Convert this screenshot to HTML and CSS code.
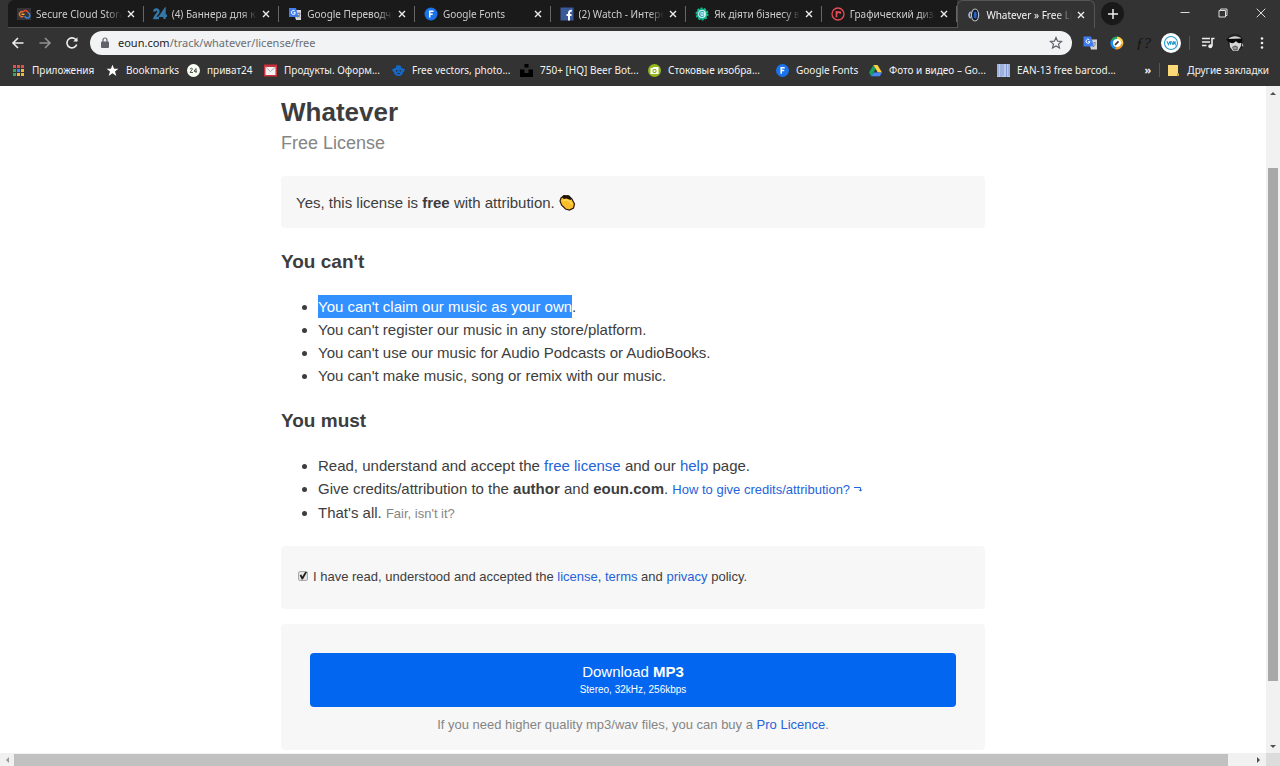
FILE: index.html
```
<!DOCTYPE html>
<html lang="en">
<head>
<meta charset="utf-8">
<meta name="viewport" content="width=device-width, initial-scale=1">
<title>Whatever » Free License</title>
<link rel="stylesheet" href="styles.css">
</head>
<body>
<header class="browser">
  <div class="tabstrip">
    <div class="tabs">
      <div class="tab"><svg class="fav" viewBox="0 0 14 14"><rect y="1" width="14" height="12" fill="#353535"/><g fill="none" stroke-width="1.4"><path d="M6.500 5.200a2.500 2.500 0 1 0 0 4" stroke="#ef6b35"/><path d="M4.500 7.300h3" stroke="#f5b72c"/><path d="M6.500 4.500a2.700 2.700 0 0 1 4.700 1.700" stroke="#e94635"/><path d="M11.400 6a2.600 2.600 0 1 1-3.600 3" stroke="#3387e8"/></g></svg><span class="tab-title">Secure Cloud Stora</span><button class="close" aria-label="Close tab"><svg viewBox="0 0 8 8"><path d="m1 1 6 6m0-6-6 6"/></svg></button></div>
      <div class="tab"><svg class="fav" viewBox="0 0 14 14"><g fill="none" stroke="#3478a8" stroke-width="2.4"><path d="M1 4.500C2 1.500 6 2 5.300 5 5 7 2 8.500 1.500 11H6"/><path d="M11.500 12V3L7.500 8.800H14"/></g></svg><span class="tab-title">(4) Баннера для ка</span><button class="close" aria-label="Close tab"><svg viewBox="0 0 8 8"><path d="m1 1 6 6m0-6-6 6"/></svg></button></div>
      <div class="tab"><svg class="fav" viewBox="0 0 14 14"><path d="M5 3h8v10H8z" fill="#d8d9dc"/><path d="M1 1h7l2.500 9H1z" fill="#3f7df0"/><path d="M6.800 4a2 2 0 1 0 .6 1.700H5.500" fill="none" stroke="#fff"/><path d="M9.500 6.500h3M11 5.500v1M12 7c-.5 2-1.500 3-2.500 3.500M10 8l2 2.500" fill="none" stroke="#667" stroke-width=".8"/></svg><span class="tab-title">Google Переводчи</span><button class="close" aria-label="Close tab"><svg viewBox="0 0 8 8"><path d="m1 1 6 6m0-6-6 6"/></svg></button></div>
      <div class="tab"><svg class="fav" viewBox="0 0 14 14"><circle cx="7" cy="7" r="6.500" fill="#1a73e8"/><path d="M5.700 10.500V4.200h3.800M5.700 7.200h3" fill="none" stroke="#fff" stroke-width="1.500"/></svg><span class="tab-title">Google Fonts</span><button class="close" aria-label="Close tab"><svg viewBox="0 0 8 8"><path d="m1 1 6 6m0-6-6 6"/></svg></button></div>
      <div class="tab"><svg class="fav" viewBox="0 0 14 14"><rect x=".5" y=".5" width="13" height="13" fill="#3b5998"/><path d="M9 13.500V6q0-2.500 2.800-2.200M6.500 8h5" fill="none" stroke="#fff" stroke-width="2"/></svg><span class="tab-title">(2) Watch - Интере</span><button class="close" aria-label="Close tab"><svg viewBox="0 0 8 8"><path d="m1 1 6 6m0-6-6 6"/></svg></button></div>
      <div class="tab"><svg class="fav" viewBox="0 0 14 14"><circle cx="7" cy="7" r="5.500" fill="#14b88a" stroke="#14b88a" stroke-width="2" stroke-dasharray="2 1.400"/><circle cx="7" cy="7" r="3.900" fill="#d9f5f2"/><path d="M9 5.500A2.500 2.500 0 1 0 9 8.500M5.500 7h3.500" fill="none" stroke="#229bc0" stroke-width="1.200"/></svg><span class="tab-title">Як діяти бізнесу в</span><button class="close" aria-label="Close tab"><svg viewBox="0 0 8 8"><path d="m1 1 6 6m0-6-6 6"/></svg></button></div>
      <div class="tab"><svg class="fav" viewBox="0 0 14 14"><g fill="none" stroke="#e84b55"><circle cx="7" cy="7" r="6" stroke-width="1.300"/><path d="M5.500 10.300V4M5.500 6.500q1-2 3.700-1.300v1.500" stroke-width="1.700"/></g></svg><span class="tab-title">Графический диза</span><button class="close" aria-label="Close tab"><svg viewBox="0 0 8 8"><path d="m1 1 6 6m0-6-6 6"/></svg></button></div>
      <div class="tab active"><svg class="fav" viewBox="0 0 14 14"><ellipse cx="8" cy="7" rx="3.600" ry="6" fill="#151922" stroke="#b9bfcb" stroke-width="1.200"/><ellipse cx="8.200" cy="7" rx="1.500" ry="3.500" fill="#2864c8"/><path d="M3.700 3.800Q.3 7 3.700 10.200" fill="none" stroke="#a9b8da" stroke-width="1.700"/></svg><span class="tab-title">Whatever » Free Li</span><button class="close" aria-label="Close tab"><svg viewBox="0 0 8 8"><path d="m1 1 6 6m0-6-6 6"/></svg></button></div>
    </div>
    <button class="new-tab" aria-label="New tab"><svg viewBox="0 0 10 10"><path d="M5 0v10M0 5h10"/></svg></button>
    <div class="window-controls">
      <button aria-label="Minimize"><svg viewBox="0 0 10 10"><path d="M.5 4.500h9"/></svg></button>
      <button aria-label="Restore"><svg viewBox="0 0 10 10"><path d="M1 2.500h6.500V9H1zM2.700 2.500V1h6.300v6.500H7.500"/></svg></button>
      <button aria-label="Close"><svg viewBox="0 0 10 10"><path d="m.7.7 8.600 8.600m0-8.600L.7 9.300"/></svg></button>
    </div>
  </div>
  <div class="toolbar">
    <button class="tool" aria-label="Back"><svg viewBox="0 0 14 14" class="line"><path d="M12.500 7H2M7 2 2 7l5 5"/></svg></button>
    <button class="tool dim" aria-label="Forward"><svg viewBox="0 0 14 14" class="line"><path d="M1.500 7H12M7 2l5 5-5 5"/></svg></button>
    <button class="tool" aria-label="Reload"><svg viewBox="0 0 14 14" class="line"><path d="M11.700 8.500a5 5 0 1 1-1.200-5.200L12 5"/><path d="M12.500 1.200v4.300H8.200z" fill="#eee" stroke="none"/></svg></button>
    <div class="omnibox">
      <svg class="lock" viewBox="0 0 10 12"><rect x="1" y="4.500" width="8" height="6.500" rx="1" fill="#5f6368"/><path d="M3 5V3a2 2 0 0 1 4 0v2" fill="none" stroke="#5f6368" stroke-width="1.200"/></svg>
      <a class="url" href="#top"><span class="host">eoun.com</span>/track/whatever/license/free</a>
      <button class="star" aria-label="Bookmark this page"><svg viewBox="0 0 14 14"><path d="m7 1.500 1.600 3.700 4 .3-3.100 2.600 1 4L7 10l-3.500 2.100 1-4-3.100-2.600 4-.3z" fill="none" stroke="#5f6368" stroke-width="1.200"/></svg></button>
    </div>
    <div class="extensions">
      <button class="tool" aria-label="Translate"><svg viewBox="0 0 14 14"><path d="M5 3.500h9v10H8z" fill="#d2d3d5"/><path d="M.5.500h7.500l3 10H.5z" fill="#3f7df0"/><path d="M6.300 3.700a2 2 0 1 0 .7 2H5" fill="none" stroke="#fff"/><path d="M10 7h3M11.500 6v1M12.500 7.500c-.5 2-1.500 3-2.500 3.500" fill="none" stroke="#778" stroke-width=".8"/></svg></button>
      <button class="tool" aria-label="Color picker"><svg viewBox="0 0 14 14"><path d="M7 7 1.400 3.500A6.500 6.500 0 0 0 5 13.200z" fill="#1d8df2"/><path d="M7 7 5 13.200A6.500 6.500 0 0 0 13 9z" fill="#f39b27"/><path d="M7 7l6 2A6.500 6.500 0 0 0 7 .5z" fill="#ffd142"/><path d="M7 7V.5a6.500 6.500 0 0 0-5.600 3z" fill="#21a465"/><circle cx="7" cy="7" r="4" fill="#fff"/><path d="m5 9 3.500-3.700" stroke="#333" stroke-width="1.700"/></svg></button>
      <button class="tool fx" aria-label="Font finder">ƒ?</button>
      <button class="tool" aria-label="Extension"><svg class="large" viewBox="0 0 20 20"><circle cx="10" cy="10" r="10" fill="#fff"/><circle cx="10" cy="10" r="6.500" fill="none" stroke="#269bd0" stroke-width="1.100"/><path d="m6 8.200 1.500 3.500L9 8.200M9.500 8.200v3.500m1-3.500 1.200 3.500m.8-3.500v3.500m.3-3 1.400 2.500V8.200" fill="none" stroke="#269bd0" stroke-width="1.100"/></svg></button>
      <span class="rule"></span>
      <button class="tool" aria-label="Media"><svg viewBox="0 0 14 14" class="line"><path d="M1 2.500h8M1 6h8M1 9.500h4.500M11 10V2.500h2.500"/><circle cx="9.300" cy="10.200" r="2" fill="#eee" stroke="none"/></svg></button>
      <button class="tool" aria-label="Profile"><svg class="large" viewBox="0 0 20 20"><path d="M3 8C2 3 5 1 10 1c5-.5 8 3 7.500 7l1 6-5 4H7l-4-6z" fill="#222"/><path d="M4 5q6-3.500 12 0v8l-3 5H8l-3-4z" fill="#d6d6d6"/><path d="M1 6 17 5.500l-.5 4q-3 2-5-1h-1Q8 11.500 3.500 9z" fill="#080808"/><path d="M7 14q3.500-3 6 0l-.5 3.500h-4z" fill="#666"/><path d="M8.500 15h3M17 10.500l1 3" fill="none" stroke="#ccc"/></svg></button>
      <button class="tool" aria-label="Menu"><svg viewBox="0 0 14 14" fill="#eee"><circle cx="7" cy="2.500" r="1.300"/><circle cx="7" cy="7" r="1.300"/><circle cx="7" cy="11.500" r="1.300"/></svg></button>
    </div>
  </div>
  <nav class="bookmarks" aria-label="Bookmarks">
    <a class="bm apps" href="#"><svg viewBox="0 0 13 13"><path d="M1 1h3v3H1zM5 1h3v3H5zM9 1h3v3H9z" fill="#e05245"/><path d="M1 5h3v3H1zM1 9h3v3H1z" fill="#40a461"/><path d="M5 5h3v3H5z" fill="#4285f4"/><path d="M9 5h3v3H9zM9 9h3v3H9zM5 9h3v3H5z" fill="#eeb83a"/></svg><span>Приложения</span></a>
    <a class="bm starred" href="#"><svg viewBox="0 0 13 13"><path d="m6.500.8 1.600 4h4.300L9 7.500l1.300 4.400-3.800-2.600-3.800 2.600L4 7.500.6 4.800h4.300z" fill="#fff"/></svg><span>Bookmarks</span></a>
    <a class="bm short" href="#"><svg viewBox="0 0 13 13"><circle cx="6.500" cy="6.500" r="6.500" fill="#f7fff3"/><path d="M3 5q2-2 2.500 0L3 8.500h3M9 9V4.500L7 7.300h3" fill="none" stroke="#555"/></svg><span>приват24</span></a>
    <a class="bm wide" href="#"><svg viewBox="0 0 13 13"><rect y=".5" width="13" height="12" fill="#c9313d"/><path d="M1.500 3h10v8h-10z" fill="#f3f3f3"/><path d="m1.500 3 5 4.500 5-4.500" fill="none" stroke="#b9a8a9"/></svg><span>Продукты. Оформ...</span></a>
    <a class="bm wide" href="#"><svg viewBox="0 0 13 13"><path d="M2 4h9v5q-1 3-4.500 3T2 9zM0 5h2v3H1zM11 5h2l-1 3h-1zM4 2l2-1 3 1v2H4z" fill="#1768c4"/><path d="M4 6h1.500v1.500H4zM7.500 6H9v1.500H7.500zM5 9h3v1H5z" fill="#333"/></svg><span>Free vectors, photo...</span></a>
    <a class="bm wide" href="#"><svg viewBox="0 0 13 13"><path d="M4.500 0h4v3.500h-4zM0 5.500h4.500V9h4V5.500H13V13H0z" fill="#000"/></svg><span>750+ [HQ] Beer Bot...</span></a>
    <a class="bm wide" href="#"><svg viewBox="0 0 13 13"><circle cx="6.500" cy="6.500" r="6.500" fill="#94b71d"/><path d="M2.500 4h2l1-1h5v7h-8z" fill="#fff"/><circle cx="6.500" cy="7" r="2.200" fill="#94b71d"/><circle cx="6.500" cy="7" r="1" fill="#fff"/></svg><span>Стоковые изобра...</span></a>
    <a class="bm medium" href="#"><svg viewBox="0 0 13 13"><circle cx="6.500" cy="6.500" r="6.500" fill="#1a73e8"/><path d="M5.200 9.800V3.700h3.500M5.200 6.600h3" fill="none" stroke="#fff" stroke-width="1.500"/></svg><span>Google Fonts</span></a>
    <a class="bm wide" href="#"><svg viewBox="0 0 13 13"><path d="M4.500 1 0 8.500l2.200 3.700 4.500-7.500z" fill="#18a25f"/><path d="M4.500 1h4L13 8.500H8.800z" fill="#ffcf44"/><path d="M4.500 8.500H13l-2.200 3.700H2.200z" fill="#4688f4"/></svg><span>Фото и видео – Go...</span></a>
    <a class="bm wide" href="#"><svg viewBox="0 0 13 13"><path d="M0 0h13v13H0z" fill="#bac9ec"/><path d="M1 0v12M4 0v13M6 0v12M9.500 0v13M12 0v12" stroke="#8199cf"/></svg><span>EAN-13 free barcod...</span></a>
    <div class="bookmark-end"><button class="more" aria-label="More bookmarks">»</button><span class="rule"></span><a class="bm" href="#"><svg viewBox="0 0 13 13"><path d="M1 1h10v8l1 1v2H1z" fill="#fada76"/><path d="M10 9v3h2v-2z" fill="#c99e35"/></svg><span>Другие закладки</span></a></div>
  </nav>
</header>
<div class="viewport">
  <main id="top" class="page">
    <article class="content">
      <h1>Whatever</h1>
      <p class="subtitle">Free License</p>
      <div class="panel notice">Yes, this license is <strong>free</strong> with attribution. <svg class="clap" role="img" aria-label="clapping hands" viewBox="0 0 17 17"><path d="M2 4 5 1.500l5 .5 3 3 2.500 5-1 4-4 2-4-1-4-4-1.500-4z" fill="#fcbd2c" stroke="#281b0b" stroke-width="1.200"/><path d="m3 3.500 2-2.500 2 1 2-1 2 2 2 1.500-1.500 1.500-4-1.500L5 5z" fill="#211509"/><path d="m4 7 3-1.500 4 2 2 3" fill="none" stroke="#ffdb50" stroke-width="1.500"/></svg></div>
      <h2>You can't</h2>
      <ul>
        <li><mark>You can't claim our music as your own</mark>.</li>
        <li>You can't register our music in any store/platform.</li>
        <li>You can't use our music for Audio Podcasts or AudioBooks.</li>
        <li>You can't make music, song or remix with our music.</li>
      </ul>
      <h2>You must</h2>
      <ul>
        <li>Read, understand and accept the <a href="#">free license</a> and our <a href="#">help</a> page.</li>
        <li>Give credits/attribution to the <strong>author</strong> and <strong>eoun.com</strong>. <a class="small" href="#">How to give credits/attribution? <svg class="turn" viewBox="0 0 9 9"><path d="M0 2.500h6.500V6M5 4.500l1.500 1.700L8 4.500"/></svg></a></li>
        <li>That's all. <span class="small muted">Fair, isn't it?</span></li>
      </ul>
      <div class="panel consent"><input id="accept" type="checkbox" checked><label for="accept">I have read, understood and accepted the <a href="#">license</a>, <a href="#">terms</a> and <a href="#">privacy</a> policy.</label></div>
      <div class="panel download">
        <button class="download-button"><span>Download <strong>MP3</strong></span><small>Stereo, 32kHz, 256kbps</small></button>
        <p class="small muted">If you need higher quality mp3/wav files, you can buy a <a href="#">Pro Licence</a>.</p>
      </div>
    </article>
  </main>
  <div class="scroll vertical" aria-hidden="true"><svg viewBox="0 0 14 14"><path d="m4 9 3-3 3 3z"/></svg><div class="track"><div class="thumb"></div></div><svg viewBox="0 0 14 14"><path d="m4 6 3 3 3-3z"/></svg></div>
  <div class="scroll horizontal" aria-hidden="true"><svg class="disabled" viewBox="0 0 14 14"><path d="M9 4 6 7l3 3z"/></svg><div class="track"><div class="thumb"></div></div><svg viewBox="0 0 14 14"><path d="m5 4 3 3-3 3z"/></svg></div>
  <div class="corner"></div>
</div>
</body>
</html>
```
FILE: styles.css
```
* { box-sizing: border-box; }
body {
  margin: 0;
  height: 100vh;
  display: flex;
  flex-direction: column;
  overflow: hidden;
  background: #fff;
  color: #3d3d3d;
  font: 15px/23px "Liberation Sans", Arial, sans-serif;
}
button { margin: 0; padding: 0; border: 0; background: none; color: inherit; font: inherit; }
a { color: #2563d9; text-decoration: none; }
svg { display: block; flex: none; }

.browser { background: #333; color: #eee; font: 10px/14px "Noto Sans", "Open Sans", sans-serif; }
.tabstrip { display: flex; height: 28px; padding-left: 8px; }
.tabs { display: flex; flex: 0 1 1087px; min-width: 0; }
.tab {
  flex: 1 1 0;
  min-width: 0;
  display: flex;
  align-items: center;
  gap: 5px;
  padding: 0 9px;
  background: linear-gradient(#666, #666) right center / 1px 16px no-repeat #1a1a1a;
  border-bottom: 1px solid #515151;
  color: #ccc;
}
.tab:first-child { border-top-left-radius: 6px; }
.tab.active { background: #333; color: #f4f4f4; border: 1px solid #555; border-bottom: 0; border-radius: 6px 6px 0 0; }
.fav { width: 14px; height: 14px; }
.tab-title {
  flex: 1;
  min-width: 0;
  white-space: nowrap;
  mask-image: linear-gradient(90deg, #000 82%, transparent);
}
.close svg { width: 8px; height: 8px; stroke: #eee; stroke-width: 1.4; }
.new-tab { display: grid; place-items: center; flex: none; width: 23px; height: 23px; margin: 2px 0 0 6px; border-radius: 50%; background: #191919; }
.new-tab svg { width: 10px; height: 10px; stroke: #eee; stroke-width: 1.5; }
.window-controls { display: flex; margin-left: auto; }
.window-controls button { display: grid; place-items: center; width: 38px; height: 25px; }
.window-controls svg { width: 10px; height: 10px; fill: none; stroke: #ddd; }

.toolbar { display: flex; align-items: center; height: 30px; padding: 0 5px 0 4px; }
.tool { display: grid; place-items: center; flex: none; width: 27px; height: 24px; }
.tool svg { width: 14px; height: 14px; }
.tool svg.large { width: 20px; height: 20px; }
.line { fill: none; stroke: #eee; stroke-width: 1.6; }
.dim { opacity: .5; }
.fx { color: #111; font: italic 15px/20px "Liberation Serif", serif; }
.omnibox { flex: 1; min-width: 0; display: flex; align-items: center; height: 24px; margin: 0 4px 0 5px; padding: 0 9px 0 10px; border-radius: 12px; background: #f1f3f4; }
.lock { width: 10px; height: 12px; }
.url { flex: 1; margin-left: 8px; color: #6b6e72; font-size: 11px; }
.host { color: #222; }
.star svg { width: 14px; height: 14px; }
.extensions { display: flex; align-items: center; }
.rule { flex: none; width: 1px; height: 14px; background: #555; }
.extensions .rule { margin: 0 4px 0 5px; }

.bookmarks { display: flex; align-items: center; height: 28px; padding: 0 11px 4px 12px; }
.bm { display: flex; align-items: center; flex: none; gap: 7px; color: #f2f2f2; white-space: nowrap; }
.bm svg { width: 13px; height: 13px; }
.apps { width: 94px; }
.starred { width: 81px; }
.short { width: 77px; }
.medium { width: 93px; }
.wide { width: 128px; }
.bookmark-end { display: flex; align-items: center; margin-left: auto; }
.more { margin-right: 8px; font-weight: 700; font-size: 11px; }
.bookmark-end .bm { margin-left: 7px; }

.viewport { flex: 1; min-height: 0; display: grid; grid-template: minmax(0, 1fr) 13px / minmax(0, 1fr) 14px; }
.page { overflow: hidden; }
.content { max-width: 704px; margin: 0 auto; padding-top: 11px; }
h1 { margin: 0; font-size: 26px; line-height: 30px; }
.subtitle { margin: 4px 0 21px; color: #858585; font-size: 18px; line-height: 24px; }
.panel { border-radius: 4px; background: #f7f7f7; }
.notice { padding: 15px 15px 14px; }
.clap { display: inline-block; width: 17px; height: 17px; vertical-align: -3px; }
h2 { margin: 22px 0 21px; font-size: 19px; line-height: 24px; }
ul { margin: 0; padding-left: 37px; }
mark { display: inline-block; background: #3390ff; color: #fff; }
.small { font-size: 13px; }
.muted { color: #858585; }
.turn { display: inline-block; width: 9px; height: 9px; fill: none; stroke: #2563d9; }
.consent { display: flex; align-items: center; gap: 5px; height: 63px; margin: 21px 0 15px; padding: 0 17px 2px; font-size: 13px; }
input { position: relative; appearance: none; width: 10px; height: 10px; margin: 0 0 2px; border: 1px solid #aaa; border-radius: 2px; background: #e5e5e5; }
input:checked::before { content: ""; position: absolute; inset: 0; background: #222; clip-path: polygon(8% 48%, 28% 38%, 42% 62%, 80% 0, 100% 10%, 48% 100%, 34% 100%); }
.download { padding: 29px 29px 14px; text-align: center; }
.download-button { display: block; width: 100%; height: 54px; border-radius: 4px; background: #0366f1; color: #fff; }
.download-button span { display: block; line-height: 20px; }
.download-button small { display: block; font-size: 10px; line-height: 16px; }
.download p { margin: 6px 0 0; }

.scroll { display: flex; background: #f1f1f1; }
.scroll svg { width: 14px; height: 14px; fill: #505050; }
.scroll .disabled { fill: #999; }
.track { flex: 1; display: flex; }
.vertical { flex-direction: column; }
.vertical .track { flex-direction: column; padding: 0 2px; }
.vertical .track::before { content: ""; flex: 68; }
.vertical .track::after { content: ""; flex: 58; }
.vertical .thumb { flex: 513; background: #a8a8a8; }
.horizontal .track { padding-top: 1px; }
.horizontal .track::after { content: ""; flex: 24; }
.horizontal .thumb { flex: 1214; background: #c1c1c1; }
.corner { background: #dcdcdc; }
```
